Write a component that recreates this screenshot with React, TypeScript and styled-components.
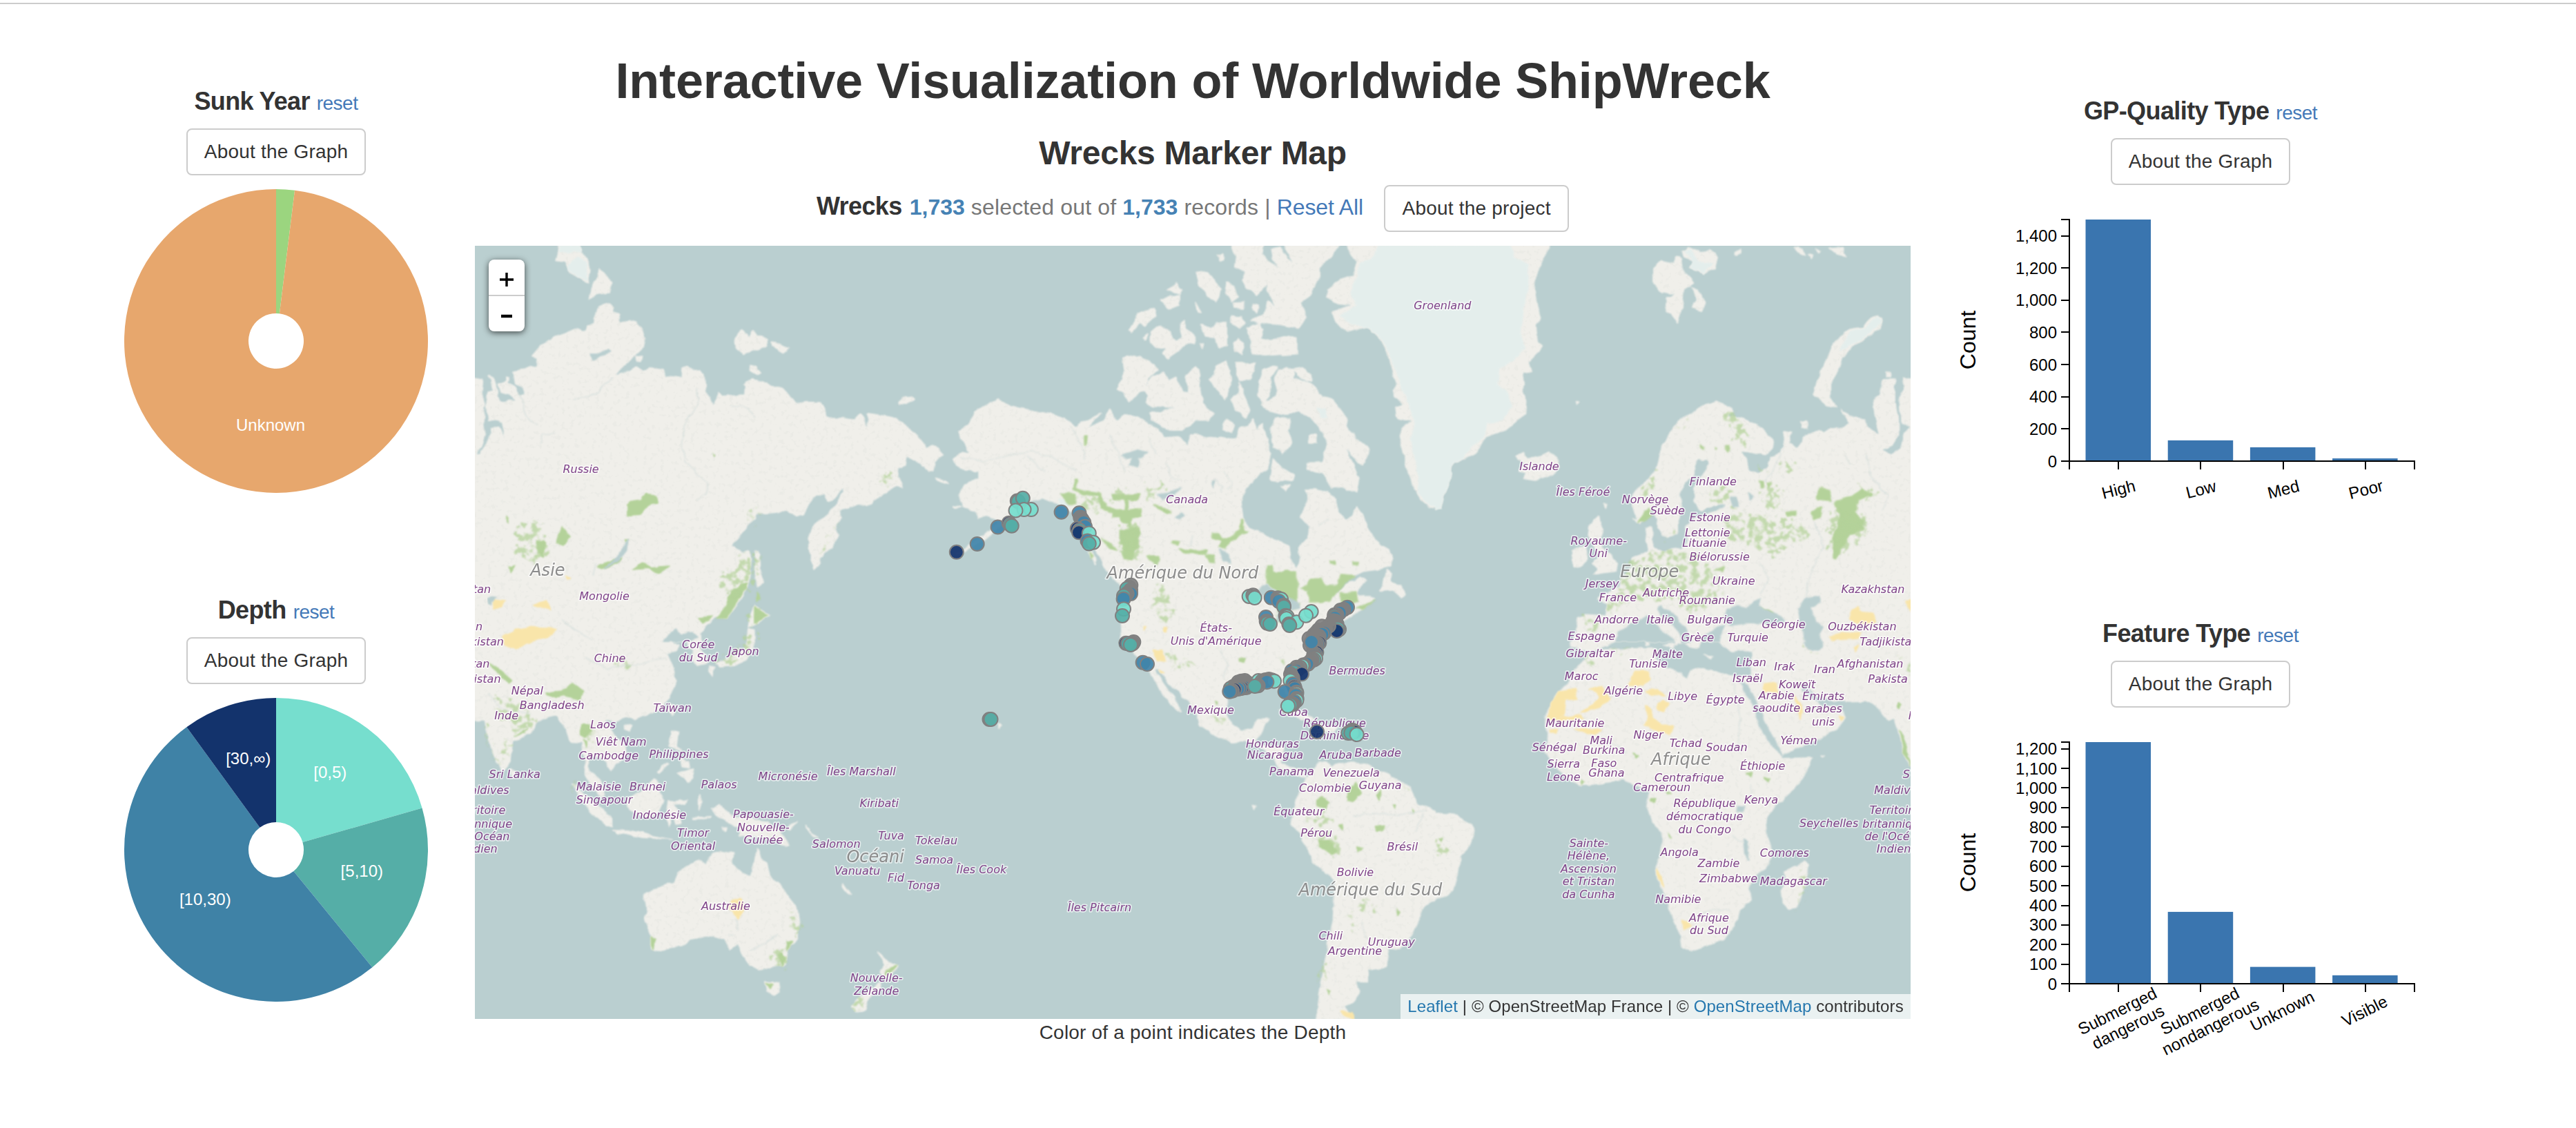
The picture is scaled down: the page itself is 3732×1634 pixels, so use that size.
import React from "react";
import styled, { createGlobalStyle } from "styled-components";

const GlobalStyle = createGlobalStyle`
  body { margin: 0; background: #fff; }
  * { box-sizing: border-box; }
`;

/* ---------- layout ---------- */

const Page = styled.div`
  width: 3732px;
  height: 1634px;
  overflow: hidden;
  padding-top: 4px;
  font-family: "Liberation Sans", Arial, sans-serif;
  font-size: 28px;
  color: #333;
`;

const TopRule = styled.div`
  height: 2px;
  background: #ccc;
`;

const Columns = styled.div`
  display: flex;
  align-items: flex-start;
`;

const SideColumn = styled.section<{ $width: number; $top: number; $left: number; $gap: number }>`
  flex: none;
  width: ${(p) => p.$width}px;
  padding: ${(p) => p.$top}px 0 0 ${(p) => p.$left}px;
  display: flex;
  flex-direction: column;
  align-items: flex-start;
  gap: ${(p) => p.$gap}px;
`;

const MainColumn = styled.main`
  flex: none;
  width: 2080px;
  padding-top: 71px;
  display: flex;
  flex-direction: column;
  align-items: center;
`;

const Panel = styled.div`
  display: flex;
  flex-direction: column;
  align-items: center;
`;

const PanelHead = styled.div<{ $gap: number }>`
  display: flex;
  align-items: baseline;
  gap: ${(p) => p.$gap}px;
  height: 40px;
  margin-bottom: 20px;
  line-height: 42px;
  white-space: nowrap;
`;

const PanelTitle = styled.strong<{ $spacing: number }>`
  font-size: 36px;
  letter-spacing: ${(p) => p.$spacing}px;
`;

const Link = styled.a`
  color: #4479b8;
  text-decoration: none;
  letter-spacing: -0.5px;
`;

const Button = styled.button<{ $width?: number }>`
  width: ${(p) => p.$width ?? 260}px;
  height: 68px;
  padding: 0;
  border: 2px solid #ccc;
  border-radius: 8px;
  background: #fff;
  color: #333;
  font: inherit;
  letter-spacing: 0.2px;
  white-space: nowrap;
`;

const Chart = styled.svg<{ $top?: number }>`
  display: block;
  margin-top: ${(p) => p.$top ?? 0}px;
  font-family: "Liberation Sans", Arial, sans-serif;
  font-size: 24px;
`;

const Title = styled.h1`
  margin: 0 0 39px;
  font-size: 72px;
  line-height: 80px;
  letter-spacing: -0.15px;
  white-space: nowrap;
`;

const Subtitle = styled.h2`
  margin: 0 0 20px;
  font-size: 48px;
  line-height: 52px;
  letter-spacing: -0.25px;
`;

const StatusRow = styled.div`
  display: flex;
  align-items: center;
  height: 68px;
  margin-bottom: 20px;
`;

const Status = styled.div`
  display: flex;
  align-items: baseline;
  padding-bottom: 6px;
  margin-right: 30px;
  line-height: 40px;
  font-size: 32px;
  color: #777;
  white-space: pre;
`;

const StatusTitle = styled.strong`
  font-size: 36px;
  color: #333;
  letter-spacing: -0.6px;
  margin-right: 11px;
`;

const Figure = styled.strong`
  color: #4682b4;
`;

const StatusText = styled.span`
  letter-spacing: 0.15px;
`;

const ResetAll = styled.a`
  color: #4479b8;
  letter-spacing: -0.1px;
`;

const MapFrame = styled.div`
  position: relative;
  width: 2080px;
  height: 1120px;
  overflow: hidden;
  background: #bacfd0;
`;

const MapCanvas = styled.svg`
  display: block;
`;

const ZoomControl = styled.div`
  position: absolute;
  left: 20px;
  top: 20px;
  width: 52px;
  height: 104px;
  border-radius: 8px;
  background: #fff;
  box-shadow: 0 2px 10px rgba(0, 0, 0, 0.65);
  display: flex;
  flex-direction: column;
`;

const ZoomButton = styled.div`
  flex: 1;
  display: flex;
  align-items: center;
  justify-content: center;
  padding-top: 6px;
  & + & { border-top: 2px solid #ccc; }
`;

const Attribution = styled.div`
  position: absolute;
  right: 0;
  bottom: 0;
  height: 36px;
  width: 739px;
  text-align: center;
  background: rgba(255, 255, 255, 0.7);
  font-size: 24px;
  line-height: 36px;
  letter-spacing: 0.1px;
  white-space: nowrap;
`;

const MapLink = styled.a`
  color: #2577ae;
`;

const Caption = styled.div`
  line-height: 40px;
  letter-spacing: 0.2px;
`;

/* ---------- donut charts ---------- */

type Slice = { from: number; to: number; fill: string };
type DonutLabel = { text: string; x: number; y: number };

const polar = (r: number, deg: number) => {
  const a = (deg * Math.PI) / 180;
  return `${220 + r * Math.sin(a)} ${220 - r * Math.cos(a)}`;
};

const slicePath = ({ from, to }: Slice) => {
  const large = to - from > 180 ? 1 : 0;
  return `M${polar(220, from)}A220 220 0 ${large} 1 ${polar(220, to)}L${polar(40, to)}A40 40 0 ${large} 0 ${polar(40, from)}Z`;
};

function Donut({ slices, labels }: { slices: Slice[]; labels: DonutLabel[] }) {
  return (
    <Chart width={440} height={440} $top={20}>
      {slices.map((s) => (
        <path key={s.from} d={slicePath(s)} fill={s.fill} />
      ))}
      {labels.map((l) => (
        <text key={l.text} x={l.x} y={l.y} fill="#fff" textAnchor="middle">{l.text}</text>
      ))}
    </Chart>
  );
}

/* ---------- bar charts ---------- */

type BarData = {
  max: number;
  step: number;
  values: number[];
  labels: string[][];
  angle: number;
};

function BarChart({ max, step, values, labels, angle }: BarData) {
  const left = 170, top = 50, w = 500, h = 350, base = top + h;
  const ticks: number[] = [];
  for (let v = 0; v <= max; v += step) ticks.push(v);
  const y = (v: number) => base - (v / max) * h;
  return (
    <Chart width={720} height={520}>
      {values.map((v, i) => (
        <rect key={i} x={left + 23.5 + i * 119.2} y={y(v)} width={94.5} height={base - y(v)} fill="#3a75af" />
      ))}
      <path d={`M${left - 12} ${top}H${left}V${base}H${left - 12}M${left} ${base + 12}V${base}H${left + w}V${base + 12}`} fill="none" stroke="#000" strokeWidth={2} />
      {ticks.map((v) => (
        <g key={v}>
          <path d={`M${left - 12} ${Math.round(y(v))}H${left}`} stroke="#000" strokeWidth={2} />
          <text x={left - 18} y={y(v) + 8.5} textAnchor="end">{v.toLocaleString("en-US")}</text>
        </g>
      ))}
      {labels.map((lines, i) => {
        const cx = left + 70.8 + i * 119.4;
        return (
          <g key={i}>
            <path d={`M${Math.round(cx)} ${base}V${base + 12}`} stroke="#000" strokeWidth={2} />
            {lines.map((t, n) => {
              const lx = cx + 2.5 + n * 15.5;
              const ly = base + (angle < -20 ? 47 : 49) + n * 23;
              return (
                <text key={t} x={lx} y={ly} textAnchor="middle" transform={`rotate(${angle} ${lx} ${ly})`}>{t}</text>
              );
            })}
          </g>
        );
      })}
      <text x={34} y={top + 174.5} fontSize={32} textAnchor="middle" transform={`rotate(-90 34 ${top + 174.5})`}>Count</text>
    </Chart>
  );
}

/* ---------- map data ---------- */

const MAP_X = 688, MAP_Y = 356;

type Sheet = {
  x: number; y: number; h: number;
  land?: string[]; ice?: string[]; water?: string[]; green?: string[]; pale?: string[]; sand?: string[]; rivers?: string[];
};

const SHEET_W = 700, GRID = 1568;

const sheets: Record<string, Sheet> = {
  siberia: {
    x: 680, y: 350, h: 580,
    land: [
      "-10,530 44,540 40,590 50,640 45,700 52,760 40,800 18,832 35,830 62,780 72,730 95,720 105,750 118,780 105,710 85,700 60,705 55,640 60,590 78,580 72,540 62,525 80,535 85,560 90,610 110,630 150,620 130,600 100,590 92,560 120,545 150,575 165,600 180,600 175,570 150,560 143,510 160,498 220,488 222,460 205,445 230,410 265,380 310,360 350,340 370,350 385,330 405,320 408,280 425,250 445,242 470,255 465,275 488,290 480,320 500,315 540,310 560,340 570,380 560,420 530,455 500,490 470,525 500,515 525,505 540,490 560,505 600,493 630,500 635,525 665,530 690,535 692,495 705,488 720,503 750,505 765,530 768,590 790,640 800,620 808,590 820,605 860,600 890,600 900,570 893,560 915,542 950,550 985,570 1015,570 1030,595 1055,635 1100,628 1140,630 1155,655 1160,690 1210,688 1250,695 1270,675 1280,690 1290,730 1297,700 1290,672 1340,680 1380,690 1420,725 1470,775 1482,810 1500,800 1525,810 1540,838 1510,860 1505,895 1490,900 1465,870 1440,855 1420,840 1415,880 1385,890 1400,930 1405,965 1380,960 1330,1000 1290,1040 1265,1025 1230,1040 1200,1055 1210,1080 1190,1110 1195,1150 1180,1195 1150,1220 1130,1265 1118,1285 1105,1230 1100,1160 1120,1110 1160,1070 1190,1030 1215,980 1210,960 1195,990 1165,1020 1155,990 1125,990 1100,1030 1085,1070 1060,1078 1030,1055 990,1062 935,1065 910,1105 880,1150 845,1195 870,1210 885,1215 905,1210 915,1240 905,1350 875,1410 835,1475 800,1470 770,1500 745,1540 760,1580 740,1600 -10,1600",
      "290,10 355,10 360,40 385,70 392,110 385,160 355,140 325,120 315,80 280,75 285,50",
      "425,108 440,130 460,160 458,200 420,205 388,225 395,180 410,150",
      "862,380 885,345 905,375 922,350 940,370 968,380 960,410 930,420 890,440 865,415",
      "980,390 1040,415 1020,435 985,410", "912,485 935,490 948,515 930,520 910,505",
      "1393,630 1410,605 1435,603 1443,620 1420,632 1395,638",
      "930,1210 942,1220 945,1300 955,1335 935,1350 928,1300",
      "925,1425 975,1465 940,1490 905,1510 910,1470", "905,1515 925,1520 925,1600 895,1600",
      "1515,925 1545,935 1555,948 1520,935", "540,450 562,448 558,470 542,468", "120,530 130,528 130,545 122,548",
    ],
    ice: ["292,10 355,10 358,38 320,45 290,40", "325,90 350,60 380,80 385,150 350,135 320,110"],
    water: [
      "515,1165 510,1210 480,1255 440,1280 480,1235 500,1200", "615,1600 640,1550 668,1520 690,1535 720,1530 740,1552 700,1570 695,1600",
      "392,440 420,440 450,418 460,430 425,450 400,462", "60,1400 85,1392 70,1420 62,1415",
    ],
    rivers: ["740,570 740,640 700,720 688,780 700,860 740,910 770,940 770,985 740,1010", "165,600 178,640 180,680 220,720", "470,530 440,555 420,590 340,620", "280,750 235,755 232,790", "400,1310 410,1260", "850,640 900,650 930,690", "300,1480 340,1520 400,1560"],
    green: [
      "515,1030 530,1015 560,1010 575,990 605,995 614,1025 590,1030 570,1045 555,1072 515,1075",
      "905,1340 875,1400 835,1475 805,1475 830,1430 850,1370 880,1340",
      "300,1120 325,1155 305,1190 282,1180", "220,1170 245,1175 240,1240 215,1200", "740,1470 790,1465 760,1495",
      "530,1285 560,1260 590,1275 650,1270 615,1300 580,1280", "415,1270 470,1245 495,1240 480,1262 430,1285",
      "925,1430 970,1465 940,1485 925,1490", "932,1370 944,1400 932,1410", "118,1080 126,1085 122,1100", "505,1165 515,1165 508,1178", "790,828 797,835 792,842", "130,1270 150,1265 135,1300",
    ],
    pale: ["890,1215 915,1215 910,1360 850,1390 800,1340 840,1300 870,1290", "160,1120 220,1100 260,1220 200,1260 150,1210", "905,1050 935,1050 915,1100", "930,1220 945,1230 940,1300 930,1290", "1335,915 1370,915 1350,965", "1130,1240 1195,1110 1180,1150", "895,1515 925,1520 920,1600 895,1600", "900,1460 925,1430 940,1500"],
    sand: ["110,1545 150,1520 200,1512 282,1515 270,1540 200,1568 150,1600 110,1575", "80,1400 115,1405 105,1430 75,1440", "205,1425 250,1405 262,1445 235,1435", "315,1312 332,1318 320,1325"],
  },
  northAmerica: {
    x: 1380, y: 350, h: 580,
    land: [
      "20,740 55,715 70,670 110,640 145,618 180,640 230,655 320,675 365,695 400,725 430,700 480,670 450,705 440,730 490,700 510,655 530,700 560,680 600,690 640,715 670,735 685,770 740,765 765,805 775,760 790,750 830,770 870,765 900,775 920,770 930,730 955,720 975,690 990,740 1005,710 1020,770 1035,830 1025,880 990,920 950,970 935,1030 940,1080 965,1120 1010,1145 1060,1175 1090,1190 1095,1240 1118,1285 1130,1250 1125,1195 1155,1160 1160,1120 1130,1080 1150,1020 1145,970 1180,970 1220,985 1245,1010 1255,1060 1275,1090 1300,1070 1310,1035 1340,1090 1360,1150 1400,1195 1427,1225 1425,1270 1380,1285 1330,1292 1300,1310 1250,1345 1240,1390 1275,1345 1320,1315 1345,1330 1325,1345 1310,1380 1370,1400 1330,1440 1290,1470 1260,1490 1240,1500 1260,1530 1220,1540 1180,1600 550,1600 545,1490 550,1440 555,1360 500,1290 475,1230 455,1190 430,1110 400,1070 350,1030 290,1005 240,1020 215,1060 180,1090 140,1130 100,1170 60,1200 10,1225 60,1185 110,1140 150,1100 120,1075 85,1085 75,1055 30,1040 22,990 40,950 85,930 85,900 40,895 10,870 0,850 30,825 55,830 45,800 25,770",
      "440,1215 455,1215 467,1262 450,1240",
      "1410,1285 1425,1300 1420,1330 1455,1345 1465,1380 1455,1393 1430,1365 1385,1370 1400,1330",
      "550,455 590,445 640,465 668,500 640,530 620,580 600,600 572,628 555,590 533,575 550,540 555,500",
      "620,580 650,530 685,510 700,545 725,530 745,590 765,595 758,520 790,488 805,505 800,560 810,630 850,675 830,700 790,700 745,740 700,735 650,700 640,670 700,660 725,655 650,645 630,630 640,605",
      "850,490 890,470 900,500 905,560 885,615 860,580 830,540 850,520",
      "920,475 985,475 965,540 930,545 920,520", "930,550 945,600 965,660 950,690 920,660 905,620 925,590",
      "1060,500 1080,490 1110,500 1105,540 1150,545 1180,570 1190,600 1230,615 1260,660 1280,690 1275,720 1310,770 1355,815 1330,880 1300,840 1270,800 1300,870 1318,930 1310,985 1270,960 1230,965 1200,905 1150,895 1150,865 1200,865 1215,780 1190,720 1160,690 1120,660 1080,680 1030,665 1000,640 1030,620 1055,590 1045,540",
      "1010,500 1035,485 1055,490 1035,530 1030,590 1010,650 990,600 995,540",
      "1110,500 1140,492 1160,520 1165,545 1120,530",
      "950,335 1000,320 1010,345 1000,380 1030,390 1070,375 1120,375 1120,440 1040,447 970,440 970,390",
      "905,10 1010,10 1005,50 1040,85 1060,120 1040,60 1035,30 1060,20 1090,70 1110,90 1080,30 1080,10 1255,10 1230,60 1190,100 1190,140 1160,215 1130,240 1145,300 1125,340 1060,325 1000,320 970,310 1010,285 1020,230 1050,260 1020,190 1025,165 990,210 955,180 940,150 950,120 915,100 920,60",
      "790,120 820,115 850,150 870,190 860,235 830,215 800,165", "890,160 915,175 928,215 905,235 885,200",
      "910,240 945,238 945,260 915,258", "975,245 992,250 985,280 975,265", "905,290 940,295 950,320 930,340 905,320",
      "640,400 650,350 670,330 700,340 725,390 745,370 735,330 750,305 760,350 790,370 785,400 755,405 730,430 700,455 680,440 695,420 660,415",
      "572,350 600,280 655,255 660,290 625,330 610,320 580,360", "695,190 730,165 745,190 735,205", "695,220 735,210 735,250 705,265 675,230",
      "805,320 840,345 860,315 890,320 890,410 865,415 850,380 820,370", "788,240 808,280 795,275", "912,395 925,375 945,395 940,440 915,430",
      "875,715 895,690 915,720 905,750 880,740", "1050,690 1100,695 1085,740 1100,790 1070,830 1040,800 1035,730",
      "1155,760 1180,755 1180,790 1158,790", "1040,850 1070,890 1110,915 1105,935 1075,930 1055,945 1030,930", "1070,960 1095,950 1080,978",
      "860,50 878,45 880,75 868,80", "800,395 815,400 810,418", "620,370 635,360 630,385", "1280,10 1600,10 1600,1050 1550,1040 1520,1010 1495,960 1475,880 1455,800 1455,740 1495,700 1445,690 1440,650 1465,640 1430,605 1440,560 1420,480 1410,430 1385,370 1340,335 1280,355 1245,310 1230,275 1300,250 1260,245 1215,215 1215,190 1260,150 1300,135 1315,80 1290,50", "0,1040 25,1042 10,1048",
    ],
    ice: ["1385,10 1600,10 1600,1050 1545,1030 1510,980 1505,880 1490,780 1500,700 1480,640 1455,560 1430,480 1410,410 1385,365 1340,335 1300,325 1260,290 1310,250 1290,200 1310,140 1325,85 1370,60", "1180,650 1210,660 1215,690 1195,685", "345,1010 365,1015 375,1035 350,1030"],
    water: [
      "990,1365 1020,1345 1050,1365 1040,1385 1000,1385", "1060,1420 1070,1430 1065,1485 1052,1490", "1085,1395 1120,1410 1125,1440 1090,1440",
      "870,1205 895,1225 900,1260 880,1250", "550,835 600,815 632,825 605,850 600,880 570,880 585,845 565,850", "660,990 700,985 745,965 710,1000 680,1015",
      "725,1080 745,1065 755,1070 735,1085", "840,940 850,935 848,965",
    ],
    rivers: ["30,850 100,860 180,835 260,820 330,850 400,900", "380,720 420,790 430,850", "510,760 540,830 560,900", "850,930 880,960 870,980", "880,900 905,940 895,970", "690,870 710,920 740,930", "1000,1300 960,1310", "780,1150 770,1190", "240,840 300,900", "1220,1090 1190,1110", "640,780 660,830"],
    green: [
      "350,985 395,985 400,1030 375,1030", "400,930 408,930 398,965 430,978 480,985 500,1040 530,1050 520,1065 485,1045 475,995 425,990 390,970",
      "515,990 605,990 605,1012 570,1012 570,1048 558,1048 560,1012 520,1010", "520,1050 612,1048 614,1075 580,1080 575,1130 568,1105 550,1100 545,1075 520,1075",
      "545,1130 607,1120 605,1200 590,1210 585,1243 556,1240 556,1185 545,1185", "630,1230 668,1230 665,1265 640,1250", "735,1205 822,1207 822,1225 750,1222",
      "820,1228 848,1230 850,1258 835,1255", "655,1030 690,1040 710,1065 695,1068", "840,1140 865,1140 870,1160 890,1160 935,1130 937,1090 943,1090 945,1130 960,1135 930,1150 900,1178 885,1205 865,1195 870,1170 845,1160",
      "1018,1270 1037,1270 1040,1292 1116,1292 1116,1410 1060,1410 1050,1360 1018,1340", "1125,1355 1150,1350 1165,1320 1195,1320 1210,1345 1250,1345 1260,1305 1305,1310 1270,1345 1250,1375 1220,1410 1160,1412 1155,1370",
      "1260,1375 1310,1370 1315,1410 1280,1430 1260,1410", "1310,1440 1370,1405 1335,1440", "430,760 438,765 434,793 430,795", "445,1215 457,1230 450,1245", "1222,1252 1242,1250 1240,1264 1222,1262", "1298,1253 1320,1253 1318,1263 1300,1263", "480,1160 530,1195 535,1210 505,1195", "715,1170 735,1175 730,1190 712,1180",
    ],
    pale: ["660,1340 690,1350 700,1420 720,1460 690,1500 655,1450", "620,960 690,960 680,980 640,1010", "400,1000 480,1000 480,1050 420,1060", "1060,1410 1120,1420 1100,1500 1050,1490", "515,980 610,985 600,1010 520,1015", "545,1120 610,1115 610,1245 550,1240", "1250,1400 1290,1400 1260,1440"],
    sand: ["683,1505 697,1505 695,1535 685,1530", "618,1508 628,1510 622,1520"],
  },
  europe: {
    x: 2080, y: 350, h: 580,
    land: [
      "-10,10 370,10 340,90 325,130 320,190 330,260 340,300 325,330 330,390 345,410 325,440 300,470 310,510 285,515 290,560 280,575 293,620 290,675 230,735 160,765 135,820 90,855 55,865 45,930 25,1000 15,1050 -10,1052",
      "262,840 285,825 300,850 335,840 365,822 395,850 400,880 375,915 330,935 285,925 295,905 270,900 285,870",
      "705,100 730,72 770,85 780,55 795,65 800,110 840,160 805,190 800,260 785,320 750,270 745,225 780,200 735,200 705,160",
      "800,35 820,20 860,45 890,30 915,60 905,105 870,128 825,100 845,75 805,60", "830,180 850,190 878,235 860,272 835,260 845,220", "970,45 990,32 990,48 975,55",
      "1165,20 1190,30 1200,55 1175,40", "1235,30 1250,35 1245,45", "1280,25 1320,20 1330,60 1300,45", "1210,50 1222,55 1218,68",
      "1410,305 1435,290 1448,305 1440,340 1400,375 1350,410 1320,460 1300,520 1280,560 1280,600 1300,650 1265,640 1225,600 1240,540 1265,470 1285,410 1340,345 1385,335",
      "655,1100 640,1040 640,990 690,930 720,880 730,820 755,760 790,700 830,670 870,640 910,625 960,655 965,670 940,680 990,690 1040,715 1090,770 1095,810 1070,838 1020,825 990,820 1010,860 1015,890 1050,910 1080,880 1085,845 1120,825 1135,800 1128,740 1155,745 1145,790 1170,810 1200,760 1240,735 1255,745 1325,725 1345,715 1315,660 1350,685 1385,700 1440,760 1425,680 1420,620 1440,600 1450,540 1490,540 1490,620 1500,700 1500,760 1480,800 1450,815 1475,835 1510,810 1520,750 1545,725 1510,710 1505,610 1520,570 1515,530 1600,560 1600,1600 430,1600 450,1560 460,1470 490,1460 550,1465 555,1420 525,1400 540,1380 570,1370 600,1350 600,1320 640,1270 640,1240 690,1215 680,1160 685,1125 705,1120 705,1200 740,1210 800,1200 820,1170 810,1120 830,1090 870,1070 920,1050 935,1035 860,1050 840,1020 840,960 870,910 890,870 885,855 850,850 840,880 835,920 800,950 790,1000 800,1050 785,1100 785,1140 755,1160 735,1150 715,1080 700,1040 690,1075 665,1105 640,1080",
      "500,1110 530,1075 535,1110 545,1130 530,1170 545,1200 590,1260 585,1290 510,1305 525,1280 510,1260 530,1230 515,1190 495,1150", "445,1210 485,1190 490,1240 475,1270 445,1275",
      "1185,705 1205,700 1205,730 1188,732", "1463,510 1475,512 1475,530 1463,530", "545,1025 555,1025 552,1040", "455,625 465,628 460,636",
    ],
    ice: ["-10,10 240,10 255,60 300,90 300,180 285,260 275,370 290,420 250,460 205,500 200,560 235,600 245,650 210,700 165,715 150,770 120,800 85,855 55,865 45,930 25,1000 15,1050 -10,1052", "805,35 830,30 850,80 900,85 870,125 830,100 840,75", "1435,295 1445,310 1400,370 1345,405 1310,425 1350,350 1400,335"],
    water: [
      "935,1490 945,1440 980,1425 1010,1435 1050,1395 1045,1430 1110,1460 1135,1490 1050,1500 1000,1495 950,1505",
      "1175,1440 1200,1395 1245,1388 1245,1410 1220,1430 1230,1480 1255,1510 1245,1540 1260,1600 1210,1600 1190,1520 1180,1480",
      "575,1600 590,1530 640,1495 690,1465 720,1510 770,1560 790,1600", "730,1425 760,1450 810,1510 830,1560 825,1600 800,1600 800,1545 765,1500 735,1465 720,1440",
      "860,1560 900,1520 935,1505 920,1560 930,1600 870,1600", "955,1000 975,1000 985,1040 965,1040", "1015,985 1030,1000 1020,1010", "870,1050 940,1030 930,1045 880,1060",
    ],
    rivers: ["1230,1100 1260,1200 1220,1280 1200,1390", "1120,830 1100,880 1070,940", "1050,1250 1080,1330 1050,1380", "1400,830 1410,920 1470,1000 1450,1050", "1330,840 1340,870"],
    green: [
      "1235,1000 1250,960 1275,970 1285,1015 1240,1010", "1295,1020 1350,1000 1385,970 1415,990 1370,1010 1360,1060 1390,1090 1385,1130 1340,1150 1320,1200 1300,1245 1290,1240 1290,1150 1310,1080",
      "1220,1060 1250,1040 1245,1080 1225,1090", "1135,1060 1170,1055 1165,1075 1140,1078", "655,1100 690,1040 700,1070 680,1095", "860,795 870,805 872,815 862,808", "943,795 950,800 948,825 942,815", "905,805 912,810 908,818", "1052,935 1062,935 1060,965 1054,965", "1075,945 1088,945 1080,970", "1050,1435 1090,1445 1100,1465", "905,1285 935,1270 930,1290",
    ],
    pale: [
      "960,1040 1000,1060 1060,1080 1110,1100 1170,1100 1200,1120 1210,1150 1150,1190 1100,1240 1050,1200 990,1180 960,1120",
      "620,1260 700,1220 800,1210 850,1240 900,1290 930,1360 880,1440 820,1440 760,1400 640,1400 560,1460 560,1420 600,1380", "1060,960 1120,980 1110,1050 1070,1060",
      "1120,850 1165,880 1150,905 1110,890", "895,965 960,970 950,1020 890,1020", "690,930 715,900 715,960 660,1000", "735,1160 780,1130 770,1160", "800,700 815,720 790,735", "1040,880 1080,890 1050,910", "930,1090 990,1060 1010,1160 960,1180",
      "1280,1060 1390,1060 1400,1140 1330,1220 1280,1200", "760,1300 900,1320 900,1420 780,1410", "1370,960 1440,990 1400,1010", "470,1470 540,1480 520,1530", "960,660 1010,760 990,800 930,680",
    ],
    sand: ["1340,1480 1350,1440 1370,1425 1380,1450 1420,1455 1430,1490 1380,1495", "1280,1545 1340,1530 1380,1535 1370,1555 1290,1560", "1525,1405 1545,1400 1545,1450 1530,1435"],
  },
  australasia: {
    x: 680, y: 930, h: 600,
    land: [
      "-10,-10 620,-10 650,-5 680,15 670,30 640,50 660,90 672,150 650,200 630,250 570,275 540,290 500,285 480,300 440,300 470,350 500,380 510,430 480,460 460,485 445,450 400,430 385,440 390,490 430,530 440,580 425,590 400,550 378,500 375,450 365,380 330,378 315,330 290,300 285,275 250,285 225,300 200,345 140,380 135,440 118,480 105,485 80,430 60,370 48,295 -10,300",
      "690,-10 770,-10 745,15 760,50 770,80 740,90 720,60 725,30", "900,-10 930,-10 915,30 900,70 860,90 810,95 800,80 850,55 890,30", "775,90 795,95 790,130 775,110",
      "655,235 668,240 655,280 645,260", "505,315 528,312 520,338 503,330", "655,340 678,340 672,390 690,410 650,395", "675,500 725,480 728,515 705,530 690,505", "685,440 712,450 715,475 690,470",
      "642,455 645,462 612,496 608,490", "335,540 370,570 420,620 465,670 465,700 440,695 400,650 370,610", "465,710 520,712 600,735 660,748 560,740 480,722",
      "515,590 560,565 600,520 620,545 615,570 630,600 610,650 580,665 540,650 515,620", "645,605 710,598 704,610 660,615 680,650 685,690 670,685 660,650 645,700 638,660",
      "745,580 755,600 745,640", "725,665 785,660 780,668 725,670", "785,630 815,620 830,640 860,660 920,665 980,690 1010,720 1040,770 1010,765 980,740 930,740 875,735 880,700 830,680 800,650",
      "1030,705 1065,680 1052,697 1035,710", "1088,695 1130,738 1120,735 1092,705", "1208,920 1245,955 1235,955 1212,932", "138,480 152,500 142,515 134,500", "820,700 832,705 828,720",
      "565,960 600,935 665,910 680,870 740,825 770,840 790,800 815,790 860,800 850,840 880,870 910,885 920,850 932,780 945,815 965,840 975,885 1010,920 1035,965 1065,1010 1073,1060 1060,1120 1040,1150 1025,1220 985,1230 945,1240 910,1225 890,1190 880,1170 875,1140 848,1170 830,1130 780,1112 720,1125 690,1150 650,1155 620,1173 588,1160 590,1110 570,1050 575,1010",
      "962,1285 1008,1290 1000,1325 985,1338 970,1320", "1322,1165 1345,1195 1360,1215 1392,1225 1370,1260 1350,1280 1335,1250 1350,1225", "1320,1300 1335,1290 1330,1310 1295,1350 1285,1390 1255,1400 1240,1380 1270,1340",
    ],
    rivers: ["380,60 440,100 520,90 640,60", "866,1050 870,1090", "840,1105 860,1115", "60,200 120,260 200,270", "1000,1100 960,1140 900,1170"],
    green: [
      "60,70 85,95 140,150 130,160 85,110", "250,190 300,185 335,155 370,185 360,220 300,205 255,205", "362,315 385,315 400,340 380,365 362,350", "370,370 382,380 378,400",
      "1030,1130 1045,1130 1035,1170", "1003,1180 1012,1180 1025,1200 1015,1225", "590,1115 605,1125 595,1165 590,1150", "965,1290 985,1295 975,1312", "1355,1240 1388,1222 1370,1250 1348,1265", "145,355 160,350 190,325 170,350",
    ],
    pale: ["50,300 60,380 95,470 80,440 48,340", "800,75 900,0 910,20 850,90", "330,535 345,540 340,555", "130,300 160,270 220,300 190,340 150,355", "110,370 130,380 120,430 100,440", "980,1180 1030,1160 1025,1230 985,1225", "1045,1020 1072,1050 1062,1120 1050,1100", "470,70 520,60 530,90 480,90", "85,210 180,240 190,300 100,290", "1240,1370 1290,1330 1260,1400", "370,320 400,330 400,400"],
    sand: ["110,-10 220,-10 150,25 115,10", "850,975 885,970 895,1010 870,1050 845,1015"],
  },
  americas: {
    x: 1380, y: 930, h: 600,
    land: [
      "545,-10 590,40 640,110 670,175 710,240 740,268 735,240 700,180 655,105 665,100 700,150 750,210 790,260 800,310 840,345 905,380 950,375 1000,400 1040,430 1060,480 1100,490 1150,520 1130,480 1100,475 1070,460 1075,400 1000,390 980,375 1000,350 1015,310 1028,290 990,290 975,325 935,335 905,310 885,260 890,210 910,180 960,165 1030,165 1080,180 1110,240 1125,230 1105,160 1110,120 1160,80 1200,40 1200,-10",
      "1120,580 1150,520 1165,490 1190,455 1215,450 1230,470 1280,455 1340,462 1390,490 1440,520 1485,550 1510,615 1568,635 1600,655 1600,970 1570,975 1530,1000 1510,1060 1490,1110 1450,1165 1410,1160 1415,1200 1405,1235 1345,1245 1345,1285 1305,1285 1320,1320 1300,1365 1270,1380 1300,1430 1180,1430 1190,1340 1210,1200 1235,1050 1240,900 1175,840 1130,730 1100,690 1110,630",
      "1060,260 1120,262 1180,295 1150,298 1100,280", "1180,310 1250,320 1240,340 1190,335", "972,618 985,620 978,632", "148,310 162,320 152,328",
    ],
    rivers: ["1300,660 1360,650 1440,655 1540,640", "1500,720 1530,650", "1330,1060 1340,1120", "870,30 890,80 880,140"],
    green: [
      "1285,560 1305,530 1325,575 1300,605 1285,595", "1180,600 1200,585 1222,605 1210,632 1185,620", "1185,750 1220,750 1250,790 1230,805 1190,775", "1372,700 1400,695 1395,715 1375,718", "1375,575 1390,560 1385,595",
      "1310,775 1333,780 1318,795", "1252,700 1265,692 1268,712", "1440,1010 1452,1020 1445,1040", "930,62 950,65 945,75 930,70", "1430,620 1440,622 1436,630", "1495,635 1503,640 1498,646", "1215,1310 1227,1320 1222,1335", "850,225 860,230 855,240",
    ],
    pale: ["1160,670 1210,650 1230,680 1200,700 1170,690", "1305,980 1345,980 1340,1015 1305,1015", "1360,995 1385,1005 1370,1020", "695,50 730,60 790,90 740,100 705,80", "1065,60 1095,80 1080,100", "1455,535 1480,560 1465,550", "1175,720 1250,740 1260,810 1200,790", "1280,1030 1300,1040 1305,1090", "840,280 880,290 870,320", "1200,1210 1215,1230 1200,1280"],
    sand: ["650,30 680,30 690,70 665,75", "670,105 690,118 680,122", "1255,1400 1300,1405 1300,1430 1270,1412"],
  },
  africa: {
    x: 2080, y: 930, h: 600,
    land: [
      "430,-10 580,-10 560,15 500,35 440,20",
      "480,70 500,45 560,28 640,25 700,22 722,35 712,60 740,95 790,115 815,142 828,105 850,98 900,112 960,132 995,125 1020,130 1025,90 1030,40 1000,30 960,35 930,10 910,-10 1600,-10 1600,500 1545,470 1530,450 1515,400 1500,330 1490,290 1470,300 1450,270 1430,240 1400,225 1330,228 1300,232 1320,250 1330,285 1300,335 1240,370 1170,400 1125,428 1120,440 1222,438 1200,500 1150,570 1100,620 1070,680 1075,740 1090,790 1085,840 1040,880 1015,920 1022,980 985,1015 975,1060 940,1120 880,1150 820,1170 800,1155 795,1110 765,1040 750,970 720,900 715,850 735,790 735,730 700,670 685,620 695,560 640,540 610,520 540,535 470,545 420,510 380,460 355,410 365,360 352,290 390,200 430,150 450,110",
      "1195,830 1210,840 1205,890 1190,960 1170,1005 1145,1010 1125,985 1120,940 1140,900 1130,870 1170,850", "740,12 775,5 770,25", "770,-10 790,-10 780,10", "800,-10 870,-10 850,22 820,15", "870,52 900,55 895,62",
      "-10,645 70,655 90,680 120,695 125,740 110,770 80,810 72,880 60,930 35,965 -10,975", "680,-10 692,-10 690,12 680,10", "1250,425 1262,428 1255,434",
    ],
    water: [
      "985,145 1015,170 1045,240 1070,310 1110,390 1128,432 1095,400 1050,320 1030,240 1000,180", "1185,160 1205,170 1230,205 1290,225 1330,228 1320,245 1260,240 1225,215 1190,180",
      "1195,-10 1255,-10 1255,20 1225,35 1200,15", "980,620 1005,620 1000,645 978,640", "1000,745 1010,760 1014,830 1005,800",
    ],
    rivers: ["960,140 980,220 990,300 980,400", "965,730 975,745 1000,760", "860,1030 920,1010 960,1020", "1020,545 1030,600", "480,400 540,360 620,420"],
    green: ["640,420 660,430 650,440", "1010,500 1030,495 1025,515", "1065,515 1085,515 1075,530", "695,592 715,592 710,605 697,603", "745,565 765,580 750,578", "1500,232 1512,240 1508,258 1500,250", "1505,330 1515,350 1535,430 1545,470 1520,420", "10,745 20,745 18,755", "755,725 765,740 758,738", "473,525 483,530 476,542"],
    pale: ["1185,-10 1200,15 1230,40 1240,45 1200,35", "0,750 40,780 35,820 10,800", "480,60 510,70 500,110", "560,30 640,25 600,40", "1505,60 1545,90 1540,110", "1190,880 1208,890 1180,1000"],
    sand: [
      "360,290 380,220 400,185 458,175 460,215 420,220 415,280 380,293", "497,180 540,165 565,215 540,245 470,270 500,240 530,215 525,190", "390,290 470,275 480,290 400,297", "645,110 690,110 697,140 670,165 625,165",
      "680,185 720,180 750,205 730,205 700,200", "720,235 735,220 757,235 740,262 720,255", "680,240 695,255 708,290 730,310 770,320 760,350 720,340 680,315 690,285", "450,330 540,330 520,350 490,350", "370,333 395,330 390,345 370,345",
      "1065,160 1105,155 1110,190 1065,190", "1160,200 1190,240 1180,290 1175,250", "1312,280 1325,285 1315,300", "800,1055 835,1070 805,1090", "718,855 725,880 740,930 722,900", "1355,20 1370,10 1365,35",
    ],
  },
};

type Anchor = "middle" | "start" | "end";
type Place = [string, number, number, Anchor?];

const places: Record<string, Place[]> = {
  siberia: [["Russie", 362, 908], ["Mongolie", 438, 1405], ["tan", 70, 1378, "end"], ["n", 43, 1524, "end"], ["kistan", 112, 1584, "end"]],
  northAmerica: [["Groenland", 1590, 267], ["Canada", 761, 1027], ["États-", 855, 1528], ["Unis d'Amérique", 855, 1579]],
  europe: [
    ["Islande", 336, 897], ["Îles Féroé", 478, 997], ["Norvège", 680, 1027], ["Suède", 752, 1070], ["Finlande", 900, 957], ["Estonie", 890, 1097], ["Lettonie", 882, 1156], ["Lituanie", 872, 1195],
    ["Royaume-", 529, 1187], ["Uni", 528, 1236], ["Biélorussie", 921, 1250], ["Jersey", 540, 1356], ["Ukraine", 967, 1346], ["Autriche", 747, 1390], ["France", 591, 1409], ["Roumanie", 881, 1422],
    ["Kazakhstan", 1419, 1378], ["Andorre", 587, 1497], ["Italie", 729, 1497], ["Bulgarie", 891, 1497], ["Géorgie", 1129, 1516], ["Ouzbékistan", 1384, 1524], ["Espagne", 506, 1562], ["Grèce", 850, 1566], ["Turquie", 1013, 1566], ["Tadjikista", 1376, 1584, "start"],
  ],
  australasia: [
    ["Corée", 743, 24], ["du Sud", 743, 74], ["Japon", 890, 52], ["Chine", 456, 78], ["tan", 66, 98, "end"], ["istan", 102, 156, "end"], ["Népal", 188, 200], ["Bangladesh", 268, 256], ["Inde", 120, 293],
    ["Taïwan", 659, 266], ["Laos", 434, 329], ["Viêt Nam", 492, 393], ["Cambodge", 452, 445], ["Philippines", 680, 440], ["Sri Lanka", 147, 516], ["aldives", 129, 576, "end"], ["Malaisie", 420, 564], ["Brunei", 578, 564],
    ["Singapour", 438, 612], ["Palaos", 810, 555], ["Micronésie", 1034, 524], ["Îles Marshall", 1272, 505], ["Kiribati", 1330, 627], ["ritoire", 117, 652, "end"], ["nnique", 139, 703, "end"], ["Océan", 131, 751, "end"],
    ["dien", 91, 799, "end"], ["Indonésie", 617, 671], ["Papouasie-", 954, 669], ["Nouvelle-", 954, 717], ["Guinée", 954, 765], ["Timor", 726, 739], ["Oriental", 726, 788], ["Salomon", 1191, 779], ["Tuva", 1411, 748, "end"],
    ["Tokelau", 1447, 768, "start"], ["Samoa", 1447, 841, "start"], ["Vanuatu", 1259, 883], ["Fid", 1411, 908, "end"], ["Tonga", 1474, 936], ["Australie", 832, 1014], ["Nouvelle-", 1321, 1288], ["Zélande", 1321, 1336],
  ],
  americas: [
    ["Îles Cook", 94, 876], ["Îles Pitcairn", 477, 1021], ["Bermudes", 1313, 125], ["Mexique", 838, 272], ["Cuba", 1107, 282], ["République", 1240, 322], ["Dominicaine", 1240, 370], ["Honduras", 1038, 402], ["Nicaragua", 1047, 444],
    ["Aruba", 1244, 444], ["Barbade", 1380, 434], ["Panama", 1101, 506], ["Venezuela", 1294, 511], ["Colombie", 1209, 569], ["Guyana", 1388, 559], ["Équateur", 1124, 656], ["Pérou", 1181, 738], ["Brésil", 1460, 790],
    ["Bolivie", 1307, 888], ["Chili", 1227, 1128], ["Uruguay", 1424, 1150], ["Argentine", 1306, 1186],
  ],
  africa: [
    ["Gibraltar", 501, 58], ["Malte", 752, 62], ["Tunisie", 690, 98], ["Maroc", 473, 145], ["Algérie", 609, 200], ["Libye", 801, 221], ["Égypte", 940, 234], ["Liban", 1024, 94], ["Irak", 1132, 109], ["Iran", 1262, 119],
    ["Afghanistan", 1410, 98], ["Israël", 1012, 152], ["Koweït", 1173, 177], ["Pakista", 1403, 156, "start"], ["Arabie", 1106, 218], ["saoudite", 1106, 266], ["Émirats", 1258, 220], ["arabes", 1258, 269], ["unis", 1258, 318],
    ["Mauritanie", 452, 323], ["Niger", 690, 366], ["Mali", 537, 387], ["Burkina", 546, 424], ["Sénégal", 385, 415], ["Tchad", 811, 398], ["Soudan", 944, 413], ["Yémen", 1178, 388], ["Sierra", 415, 478], ["Leone", 415, 526],
    ["Faso", 546, 475], ["Ghana", 554, 512], ["Éthiopie", 1061, 485], ["Centrafrique", 823, 528], ["Cameroun", 734, 565], ["Kenya", 1056, 612], ["République", 873, 627], ["démocratique", 873, 676], ["du Congo", 873, 725],
    ["I", 1534, 293, "start"], ["S", 1516, 516, "start"], ["Maldiv", 1423, 576, "start"], ["Territoir", 1408, 652, "start"], ["Seychelles", 1276, 701], ["britanniq", 1385, 703, "start"], ["de l'Océ", 1392, 751, "start"],
    ["Indien", 1431, 799, "start"], ["Angola", 791, 811], ["Zambie", 918, 853], ["Comores", 1132, 815], ["Sainte-", 497, 777], ["Hélène,", 496, 825], ["Ascension", 496, 873], ["et Tristan", 496, 922], ["da Cunha", 496, 970],
    ["Zimbabwe", 950, 910], ["Madagascar", 1161, 921], ["Namibie", 787, 988], ["Afrique", 887, 1059], ["du Sud", 887, 1107],
  ],
};

const continents: Record<string, Place[]> = {
  siberia: [["Asie", 254, 1310]],
  northAmerica: [["Amérique du Nord", 747, 1320]],
  europe: [["Europe", 694, 1316]],
  australasia: [["Océani", 1411, 834, "end"]],
  americas: [["Amérique du Sud", 1356, 961]],
  africa: [["Afrique", 796, 467]],
};

const project = (sheet: Sheet, x: number, y: number) => ({
  x: sheet.x - MAP_X + (x * SHEET_W) / GRID,
  y: sheet.y - MAP_Y + (y * sheet.h) / GRID,
});

const depthColor: Record<string, string> = { t: "#76dece", g: "#55aea7", b: "#4184aa", n: "#14346d", s: "#808080" };
type Wreck = [number, number, string];

const alaska: Wreck[] = [
  [13, 1216, "n"], [80, 1184, "b"], [147, 1118, "b"], [183, 1102, "n"], [187, 1108, "g"], [192, 1113, "g"], [210, 1015, "s"], [213, 1018, "g"], [228, 1005, "g"], [255, 1049, "t"], [232, 1049, "t"], [205, 1053, "t"],
  [353, 1059, "b"], [411, 1063, "b"], [415, 1080, "s"], [420, 1088, "s"], [426, 1100, "b"], [430, 1116, "b"], [405, 1124, "n"], [412, 1130, "g"], [410, 1139, "n"], [443, 1142, "t"], [438, 1172, "b"], [457, 1178, "t"], [443, 1183, "g"],
];

const coast: Wreck[] = [
  [235, 443, "s"], [228, 452, "s"], [218, 458, "g"], [234, 464, "s"], [232, 474, "s"], [234, 480, "b"], [218, 480, "s"], [204, 490, "g"], [203, 503, "b"], [204, 547, "t"], [198, 576, "g"],
  [247, 690, "s"], [243, 697, "s"], [214, 695, "n"], [222, 697, "g"], [234, 702, "g"], [287, 779, "b"], [306, 786, "b"],
  [749, 492, "t"], [766, 487, "s"], [773, 498, "t"], [845, 497, "b"], [874, 499, "s"], [888, 504, "t"], [878, 513, "b"], [899, 530, "s"], [900, 537, "g"], [822, 582, "b"], [824, 600, "s"], [828, 608, "g"], [840, 612, "g"],
  [908, 575, "s"], [914, 580, "t"], [911, 588, "t"], [955, 604, "t"], [922, 612, "s"], [925, 618, "g"], [1019, 558, "t"], [996, 575, "t"],
  [1176, 539, "b"], [1160, 548, "s"], [1146, 552, "s"], [1142, 563, "b"], [1130, 572, "s"], [1120, 572, "n"], [1120, 578, "g"], [1122, 586, "b"], [1114, 598, "s"], [1125, 600, "s"], [1130, 612, "s"], [1140, 635, "t"], [1134, 632, "g"], [1130, 642, "n"],
  [1095, 620, "s"], [1080, 632, "s"], [1065, 622, "s"], [1050, 638, "s"], [1040, 650, "s"], [1030, 660, "s"], [1075, 650, "b"], [1066, 656, "b"], [1052, 665, "s"], [1045, 670, "s"], [1010, 675, "s"], [1054, 694, "n"], [1047, 698, "b"], [1040, 700, "s"],
  [1014, 705, "s"], [1030, 715, "s"], [1042, 735, "n"], [1036, 742, "b"], [1030, 746, "s"], [1020, 690, "b"], [1038, 762, "t"], [1030, 767, "g"], [1022, 768, "s"], [1015, 775, "s"], [1005, 785, "s"], [1000, 786, "b"], [985, 790, "s"], [980, 794, "t"], [970, 800, "s"], [955, 800, "s"],
  [935, 815, "b"], [955, 815, "b"], [945, 822, "g"], [978, 829, "n"], [930, 830, "s"], [938, 845, "s"], [940, 860, "s"], [928, 858, "t"], [940, 872, "b"], [946, 884, "n"], [948, 892, "b"], [905, 906, "b"], [955, 908, "s"], [955, 914, "t"], [952, 922, "b"], [956, 936, "s"],
  [955, 944, "t"], [945, 950, "b"], [940, 960, "s"], [930, 955, "s"], [928, 964, "g"], [918, 968, "t"],
  [702, 865, "s"], [715, 860, "s"], [730, 858, "s"], [742, 868, "s"], [680, 884, "s"], [668, 892, "g"], [690, 880, "s"], [790, 858, "t"], [805, 860, "s"], [820, 855, "s"], [835, 852, "s"], [848, 856, "s"], [858, 860, "t"], [826, 864, "b"],
  [738, 887, "n"], [730, 888, "b"], [718, 890, "n"], [710, 892, "b"], [700, 894, "b"], [685, 897, "n"], [676, 902, "s"], [788, 880, "s"], [774, 882, "g"], [664, 905, "b"],
  [1044, 1080, "n"], [1180, 1086, "g"], [1197, 1073, "s"], [1206, 1078, "s"], [1210, 1082, "n"], [1192, 1085, "g"], [1217, 1092, "t"],
];

const wrecks = [
  ...alaska.map(([x, y, c]) => ({ ...project(sheets.northAmerica, x, y), c })),
  ...coast.map(([x, y, c]) => ({ x: 1560 - MAP_X + x / 3, y: 700 - MAP_Y + y / 3, c })),
  { x: 745.5, y: 686, c: "s" },
  { x: 747.5, y: 686, c: "g" },
];

function SheetLayer({ kind, fill }: { kind: keyof Sheet; fill: string }) {
  return (
    <>
      {Object.entries(sheets).map(([name, s]) => (
        <svg key={name} x={s.x - MAP_X} y={s.y - MAP_Y} width={SHEET_W} height={s.h} viewBox="0 0 1568 1568" preserveAspectRatio="none">
          {((s[kind] as string[]) ?? []).map((pts, i) => (
            <polygon key={i} points={pts} fill={fill} stroke={fill} strokeWidth={3} strokeLinejoin="round" />
          ))}
        </svg>
      ))}
    </>
  );
}

const NameText = styled.text<{ $size: number; $color: string }>`
  font-family: "DejaVu Sans", sans-serif;
  font-style: italic;
  font-size: ${(p) => p.$size}px;
  fill: ${(p) => p.$color};
  stroke: #fff;
  stroke-opacity: 0.6;
  stroke-width: 3.5px;
  stroke-linejoin: round;
  paint-order: stroke;
`;

function PlaceNames({ data, size, color }: { data: Record<string, Place[]>; size: number; color: string }) {
  return (
    <g>
      {Object.entries(data).flatMap(([name, list]) =>
        list.map(([text, x, y, anchor], i) => {
          const p = project(sheets[name], x, y);
          return (
            <NameText key={name + i} $size={size} $color={color} x={p.x} y={p.y - 0.5} textAnchor={anchor ?? "middle"}>{text}</NameText>
          );
        })
      )}
    </g>
  );
}

function WreckMap() {
  return (
    <MapFrame>
      <MapCanvas width={2080} height={1120}>
        <defs>
          <filter id="coast" x="0" y="0" width="100%" height="100%" colorInterpolationFilters="sRGB">
            <feTurbulence type="fractalNoise" baseFrequency="0.07" numOctaves={2} seed={4} result="n" />
            <feDisplacementMap in="SourceGraphic" in2="n" scale={7} xChannelSelector="R" yChannelSelector="G" />
            <feGaussianBlur stdDeviation={1.1} />
          </filter>
          <filter id="speckle" x="0" y="0" width="100%" height="100%" colorInterpolationFilters="sRGB">
            <feTurbulence type="fractalNoise" baseFrequency="0.11" numOctaves={3} seed={9} result="n" />
            <feColorMatrix in="n" type="matrix" values="0 0 0 0 0  0 0 0 0 0  0 0 0 0 0  0 0 6 0 -2.6" result="m" />
            <feDisplacementMap in="SourceGraphic" in2="n" scale={26} xChannelSelector="R" yChannelSelector="G" result="d" />
            <feComposite in="d" in2="m" operator="in" />
            <feGaussianBlur stdDeviation={0.9} />
          </filter>
          <filter id="grain" x="0" y="0" width="100%" height="100%" colorInterpolationFilters="sRGB">
            <feTurbulence type="fractalNoise" baseFrequency="0.16" numOctaves={2} seed={21} result="n" />
            <feColorMatrix in="n" type="matrix" values="0 0 0 0 0  0 0 0 0 0  0 0 0 0 0  0 5 0 0 -2.8" result="m" />
            <feComposite in="SourceGraphic" in2="m" operator="in" />
          </filter>
        </defs>
        <rect width={2080} height={1120} fill="#bacfd0" />
        <g filter="url(#coast)">
          <SheetLayer kind="land" fill="#f0efea" />
        </g>
        <g filter="url(#grain)" opacity={0.16}>
          <SheetLayer kind="land" fill="#cfd6d0" />
        </g>
        <g filter="url(#coast)">
          <SheetLayer kind="ice" fill="#e4eeec" />
          <SheetLayer kind="sand" fill="#f9e5aa" />
          <SheetLayer kind="green" fill="#b4d29a" />
        </g>
        <g filter="url(#speckle)" opacity={0.75}>
          <SheetLayer kind="pale" fill="#b4d29a" />
        </g>
        <g filter="url(#coast)">
          <SheetLayer kind="water" fill="#bacfd0" />
        </g>
        <g filter="url(#coast)" opacity={0.55}>
          {Object.entries(sheets).map(([name, s]) => (
            <svg key={name} x={s.x - MAP_X} y={s.y - MAP_Y} width={SHEET_W} height={s.h} viewBox="0 0 1568 1568" preserveAspectRatio="none">
              {(s.rivers ?? []).map((pts, i) => (
                <polyline key={i} points={pts} fill="none" stroke="#c6d6d5" strokeWidth={3} strokeLinejoin="round" />
              ))}
            </svg>
          ))}
        </g>
        <PlaceNames data={places} size={16} color="#7f4389" />
        <PlaceNames data={continents} size={24} color="#8c8c8c" />
        {wrecks.map((w, i) => (
          <circle key={i} cx={w.x} cy={w.y} r={10} fill={depthColor[w.c]} fillOpacity={0.93} stroke="#808080" strokeWidth={2} />
        ))}
      </MapCanvas>
      <ZoomControl>
        <ZoomButton>
          <svg width={20} height={20}><path d="M0 10H20M10 0V20" stroke="#000" strokeWidth={3.4} /></svg>
        </ZoomButton>
        <ZoomButton>
          <svg width={16} height={6}><path d="M0 3H16" stroke="#000" strokeWidth={4.4} /></svg>
        </ZoomButton>
      </ZoomControl>
      <Attribution>
        <MapLink>Leaflet</MapLink> | © OpenStreetMap France | © <MapLink>OpenStreetMap</MapLink> contributors
      </Attribution>
    </MapFrame>
  );
}

/* ---------- page ---------- */

function PanelHeading({ title, spacing }: { title: string; spacing: number }) {
  return (
    <>
      <PanelHead $gap={10}>
        <PanelTitle $spacing={spacing}>{title}</PanelTitle>
        <Link>reset</Link>
      </PanelHead>
      <Button>About the Graph</Button>
    </>
  );
}

export default function App() {
  return (
    <Page>
      <GlobalStyle />
      <TopRule />
      <Columns>
        <SideColumn $width={688} $top={120} $left={180} $gap={149}>
          <Panel>
            <PanelHeading title="Sunk Year" spacing={-0.7} />
            <Donut
              slices={[{ from: 0, to: 7.05, fill: "#9bd57f" }, { from: 7.05, to: 360, fill: "#e7a76d" }]}
              labels={[{ text: "Unknown", x: 212, y: 350 }]}
            />
          </Panel>
          <Panel>
            <PanelHeading title="Depth" spacing={-0.6} />
            <Donut
              slices={[
                { from: 0, to: 74.05, fill: "#76dece" },
                { from: 74.05, to: 140.7, fill: "#55aea7" },
                { from: 140.7, to: 323.9, fill: "#3f82a6" },
                { from: 323.9, to: 360, fill: "#13336c" },
              ]}
              labels={[
                { text: "[0,5)", x: 298.3, y: 116 },
                { text: "[5,10)", x: 344.3, y: 259 },
                { text: "[10,30)", x: 117.3, y: 300 },
                { text: "[30,∞)", x: 179.7, y: 96 },
              ]}
            />
          </Panel>
        </SideColumn>
        <MainColumn>
          <Title>Interactive Visualization of Worldwide ShipWreck</Title>
          <Subtitle>Wrecks Marker Map</Subtitle>
          <StatusRow>
            <Status>
              <StatusTitle>Wrecks</StatusTitle>
              <Figure>1,733</Figure>
              <StatusText> selected out of </StatusText>
              <Figure>1,733</Figure>
              <StatusText> records | </StatusText>
              <ResetAll>Reset All</ResetAll>
            </Status>
            <Button $width={268}>About the project</Button>
          </StatusRow>
          <WreckMap />
          <Caption>Color of a point indicates the Depth</Caption>
        </MainColumn>
        <SideColumn $width={780} $top={134} $left={60} $gap={109}>
          <Panel>
            <PanelHeading title="GP-Quality Type" spacing={-0.6} />
            <BarChart max={1501} step={200} values={[1501, 129, 86, 17]} labels={[["High"], ["Low"], ["Med"], ["Poor"]]} angle={-14} />
          </Panel>
          <Panel>
            <PanelHeading title="Feature Type" spacing={-0.6} />
            <BarChart
              max={1234}
              step={100}
              values={[1234, 367, 86, 43]}
              labels={[["Submerged", "dangerous"], ["Submerged", "nondangerous"], ["Unknown"], ["Visible"]]}
              angle={-26.6}
            />
          </Panel>
        </SideColumn>
      </Columns>
    </Page>
  );
}
